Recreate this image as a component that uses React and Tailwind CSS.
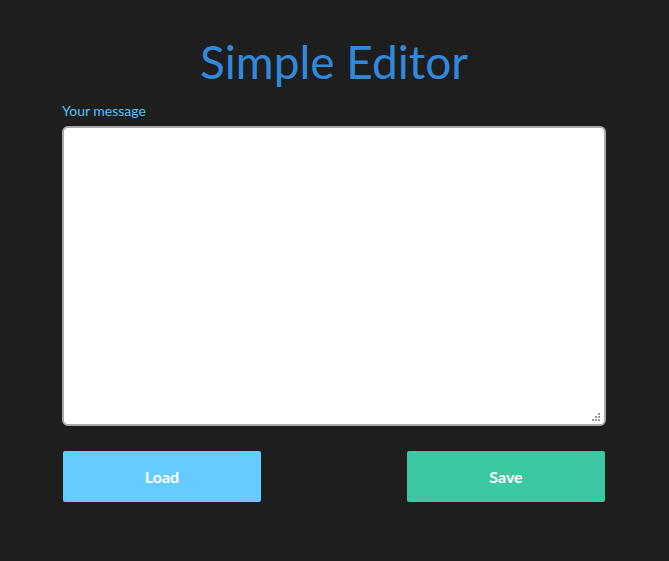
export default function App() {
  return (
    <div className="min-h-[561px] bg-[#1e1e1e] flex justify-center pr-[1px]" style={{ fontFamily: "Lato, 'Noto Sans', sans-serif" }}>
      <div className="w-[544px] flex flex-col">
        <h1 className="mt-[34px] text-center text-[46px] leading-[56px] text-[#3189dc]">Simple Editor</h1>
        <label className="mt-[11px] text-[14px] leading-[20px] text-[#5bc0f8]">Your message</label>
        <div className="relative mt-[5px]">
          <textarea className="block h-[300px] w-full resize-none rounded-[6px] border-2 border-[#a9a9a9] bg-white outline-none" />
          <div className="absolute right-[6px] bottom-[5px] grid grid-cols-3 gap-[1px]">
            <span className="h-[2px] w-[2px]" />
            <span className="h-[2px] w-[2px]" />
            <span className="h-[2px] w-[2px] bg-[#9a9a9a]" />
            <span className="h-[2px] w-[2px]" />
            <span className="h-[2px] w-[2px] bg-[#9a9a9a]" />
            <span className="h-[2px] w-[2px] bg-[#9a9a9a]" />
            <span className="h-[2px] w-[2px] bg-[#9a9a9a]" />
            <span className="h-[2px] w-[2px] bg-[#9a9a9a]" />
            <span className="h-[2px] w-[2px] bg-[#9a9a9a]" />
          </div>
        </div>
        <div className="mt-[25px] flex justify-between px-[1px]">
          <button className="h-[51px] w-[198px] rounded-[2px] bg-[#66ccff] text-[16px] font-bold text-white">Load</button>
          <button className="h-[51px] w-[198px] rounded-[2px] bg-[#3cc8a0] text-[16px] font-bold text-white">Save</button>
        </div>
      </div>
    </div>
  );
}
